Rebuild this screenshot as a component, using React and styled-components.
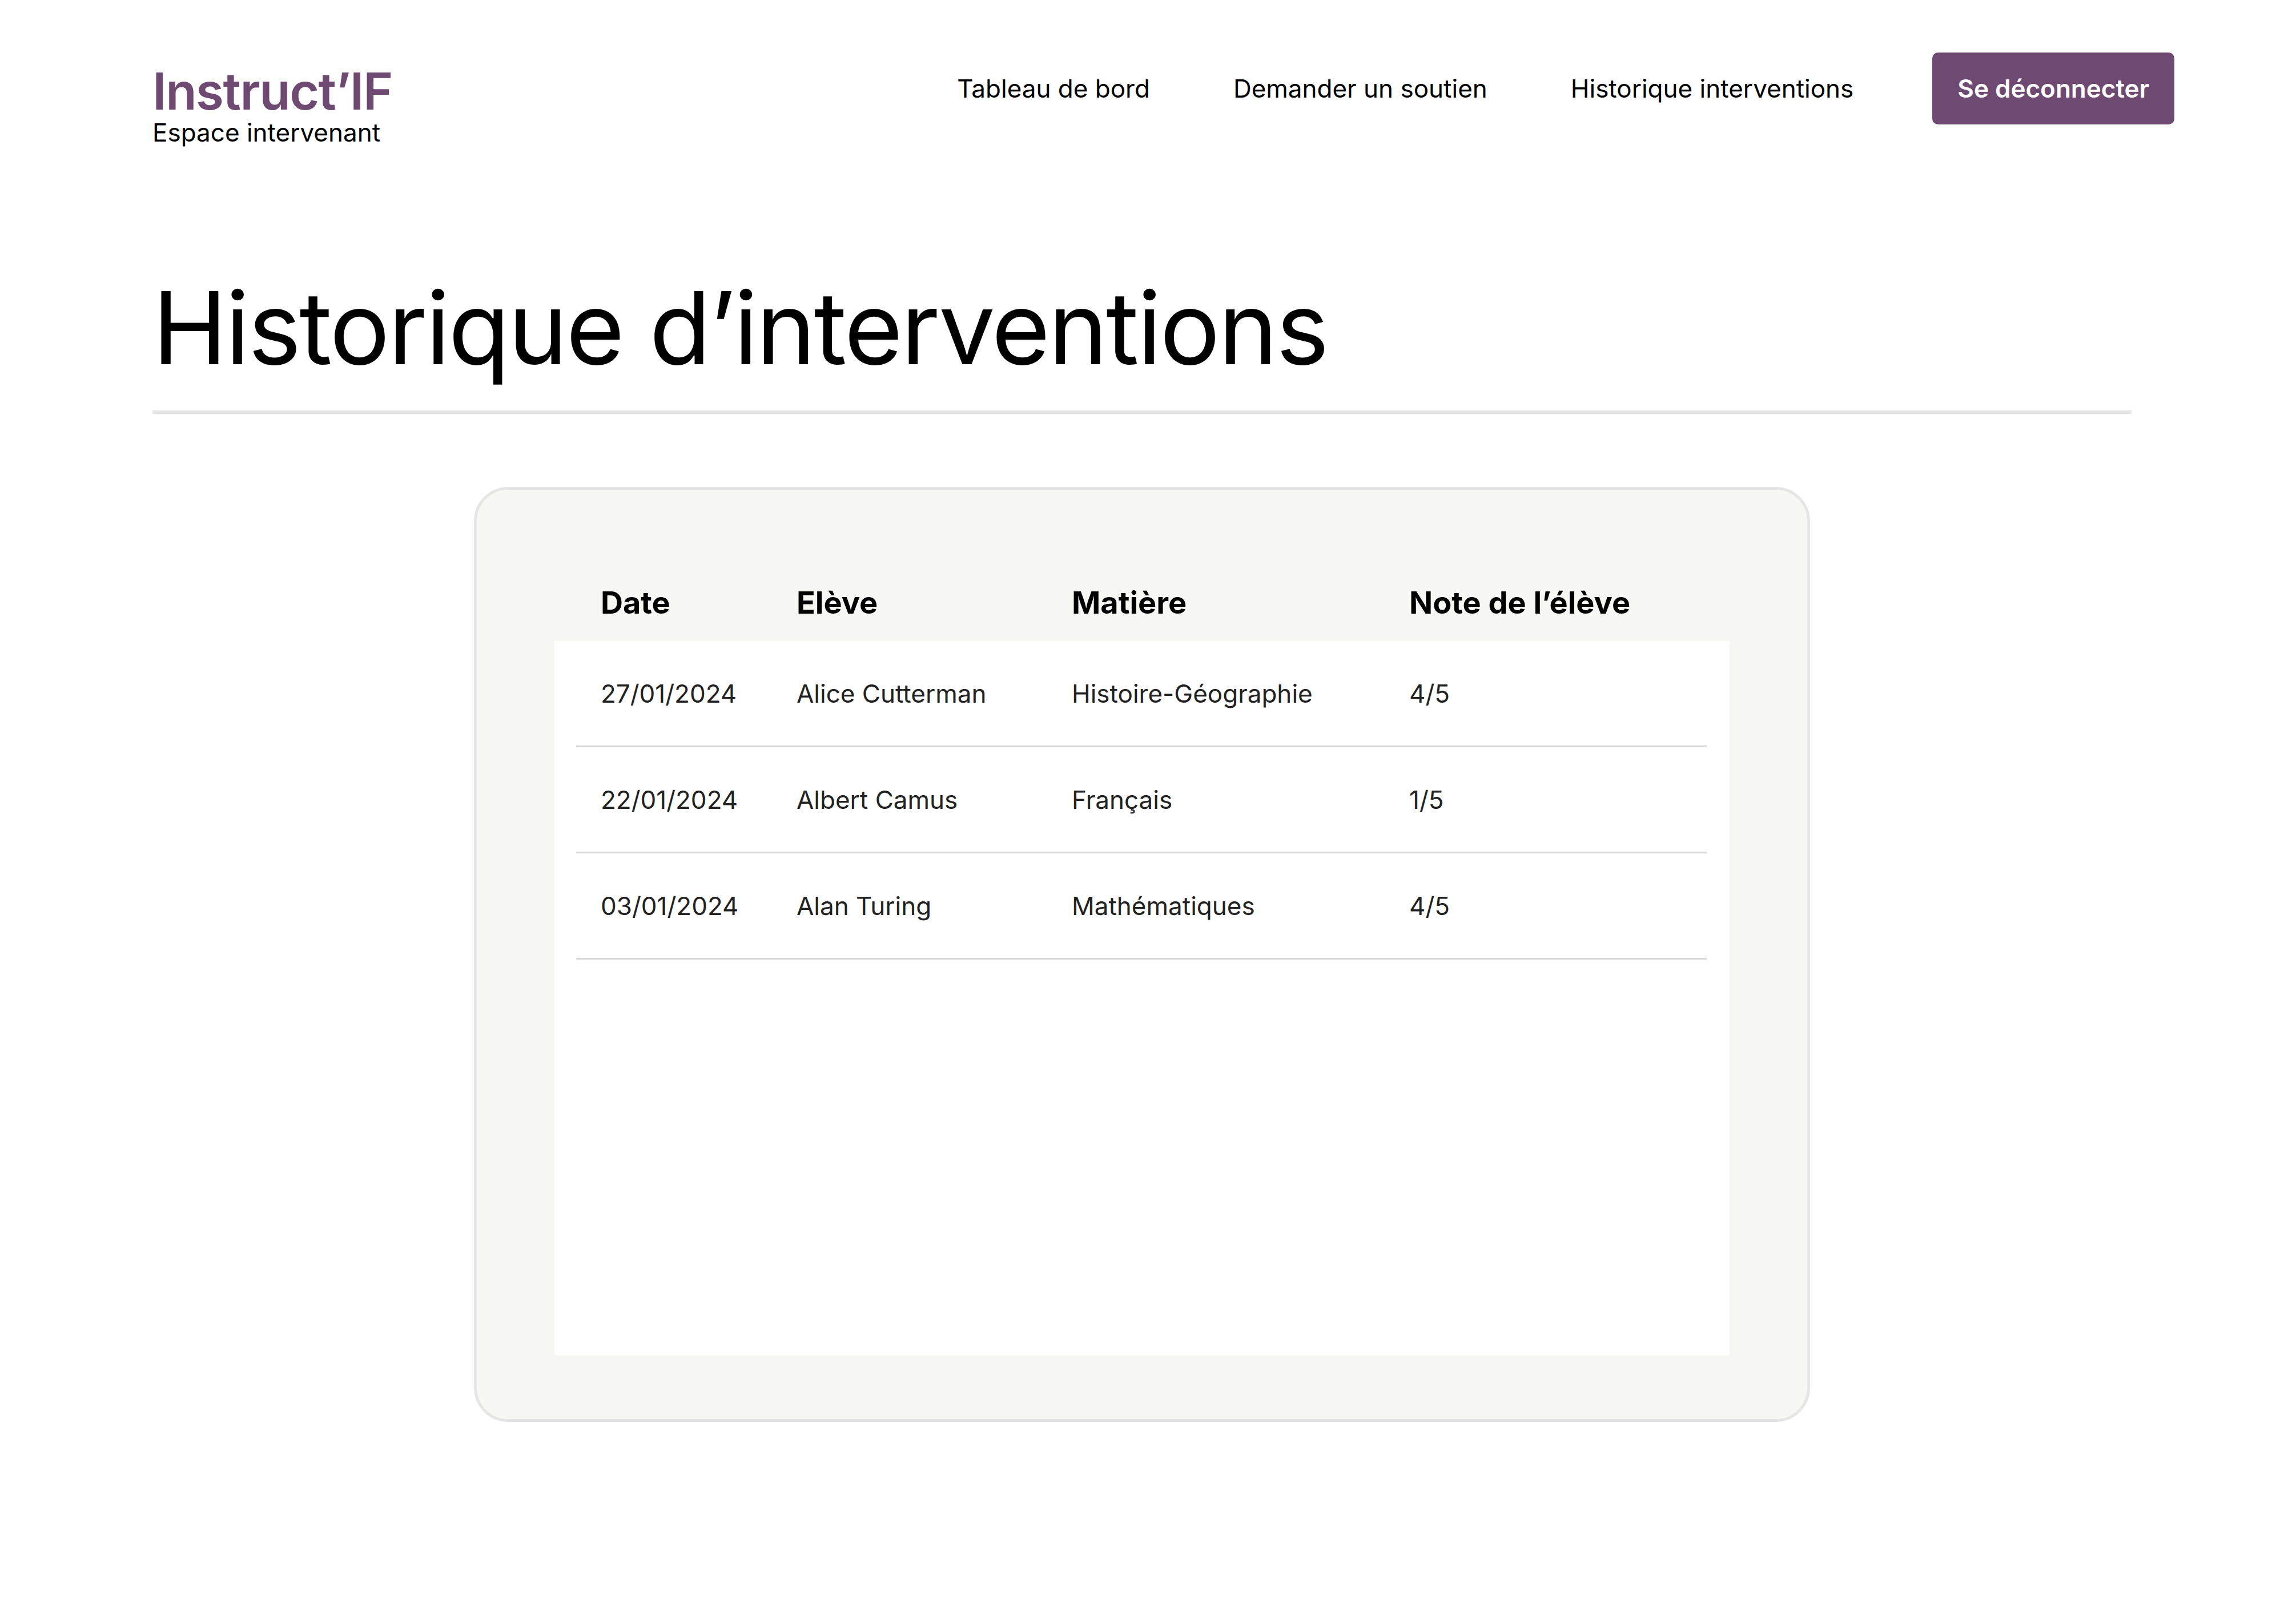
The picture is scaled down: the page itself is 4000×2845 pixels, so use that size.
import styled, { createGlobalStyle } from 'styled-components'

const interventions = [
  { date: '27/01/2024', eleve: 'Alice Cutterman', matiere: 'Histoire-Géographie', note: '4/5' },
  { date: '22/01/2024', eleve: 'Albert Camus', matiere: 'Français', note: '1/5' },
  { date: '03/01/2024', eleve: 'Alan Turing', matiere: 'Mathématiques', note: '4/5' },
]

const navLinks = ['Tableau de bord', 'Demander un soutien', 'Historique interventions']

function App() {
  return (
    <>
      <GlobalStyle />
      <Page>
        <Header>
          <Brand>
            <BrandName>Instruct’IF</BrandName>
            <BrandSub>Espace intervenant</BrandSub>
          </Brand>
          <Nav>
            {navLinks.map(link => (
              <NavLink key={link} href="#">{link}</NavLink>
            ))}
            <LogoutButton>Se déconnecter</LogoutButton>
          </Nav>
        </Header>

        <Main>
          <Title>Historique d’interventions</Title>
          <Divider />

          <Card>
            <HeadRow>
              <HeadCell>Date</HeadCell>
              <HeadCell>Elève</HeadCell>
              <HeadCell>Matière</HeadCell>
              <HeadCell>Note de l’élève</HeadCell>
            </HeadRow>
            <TableBody>
              {interventions.map(item => (
                <Row key={item.date}>
                  <Cell>{item.date}</Cell>
                  <Cell>{item.eleve}</Cell>
                  <Cell>{item.matiere}</Cell>
                  <Cell>{item.note}</Cell>
                </Row>
              ))}
            </TableBody>
          </Card>
        </Main>
      </Page>
    </>
  )
}

export default App

/***************************** Styled Components *****************************/

const purple = '#6e4a73'
const columns = '343px 482px 591px 1fr'

const GlobalStyle = createGlobalStyle`
  body {
    margin: 0;
    background: #ffffff;
    font-family: Inter, "Noto Sans", sans-serif;
    color: #000000;
  }
`

const Page = styled.div`
  width: 4000px;
  min-height: 2845px;
`

const Header = styled.header`
  display: flex;
  justify-content: space-between;
  align-items: flex-start;
  padding: 92px 192px 0 267px;
`

const Brand = styled.div`
  display: flex;
  flex-direction: column;
  margin-top: 23px;
`

const BrandName = styled.div`
  font-size: 89px;
  line-height: 1;
  font-weight: 600;
  color: ${purple};
  letter-spacing: -1.5px;
`

const BrandSub = styled.div`
  margin-top: 2px;
  font-size: 44px;
  line-height: 53px;
  color: #000000;
`

const Nav = styled.nav`
  display: flex;
  align-items: center;
  gap: 146px;
`

const NavLink = styled.a`
  font-size: 44px;
  color: #000000;
  text-decoration: none;
`

const LogoutButton = styled.button`
  height: 126px;
  padding: 0 44px;
  margin-left: -8px;
  border: none;
  border-radius: 10px;
  background: ${purple};
  color: #ffffff;
  font-family: Inter, "Noto Sans", sans-serif;
  font-size: 44px;
  font-weight: 600;
  cursor: pointer;
`

const Main = styled.main`
  padding: 0 267px;
`

const Title = styled.h1`
  margin: 0;
  margin-top: 208px;
  font-size: 176px;
  line-height: normal;
  font-weight: 400;
  letter-spacing: -3px;
`

const Divider = styled.hr`
  margin: 39px 0 0;
  height: 6px;
  border: none;
  background: #e6e6e6;
`

const Card = styled.section`
  box-sizing: border-box;
  width: 2340px;
  margin: 128px auto 0;
  padding: 165px 136px 112px;
  border: 5px solid #e6e6e6;
  border-radius: 60px;
  background: #f7f7f4;
`

const HeadRow = styled.div`
  display: grid;
  grid-template-columns: ${columns};
  margin: 0 38px 35px;
`

const HeadCell = styled.div`
  padding-left: 43px;
  font-size: 54px;
  font-weight: 700;
  line-height: normal;
`

const TableBody = styled.div`
  height: 1251px;
  padding: 0 40px 0 38px;
  background: #ffffff;
`

const Row = styled.div`
  display: grid;
  grid-template-columns: ${columns};
  align-items: center;
  height: 183px;
  border-bottom: 3px solid #d6d6d6;
`

const Cell = styled.div`
  padding-left: 43px;
  font-size: 44px;
  color: #222222;
`
